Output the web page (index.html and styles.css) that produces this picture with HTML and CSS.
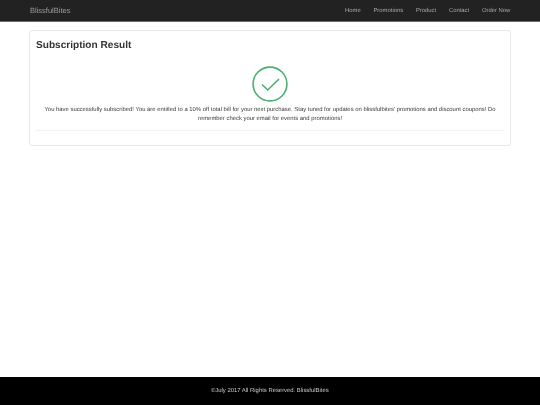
FILE: index.html
```html
<!DOCTYPE html>
<html lang="en">
<head>
<meta charset="utf-8">
<title>BlissfulBites</title>
<link rel="stylesheet" href="styles.css">
</head>
<body>
<nav class="navbar">
  <a class="brand" href="#">BlissfulBites</a>
  <ul class="nav-links">
    <li><a href="#">Home</a></li>
    <li><a href="#">Promotions</a></li>
    <li><a href="#">Product</a></li>
    <li><a href="#">Contact</a></li>
    <li><a href="#">Order Now</a></li>
  </ul>
</nav>
<main class="content">
  <section class="card">
    <h1 class="card-title">Subscription Result</h1>
    <div class="result">
      <svg class="check" viewBox="0 0 36 36" width="36" height="36" aria-hidden="true">
        <circle cx="18" cy="18" r="16.9" fill="none" stroke="#4caf72" stroke-width="1.6"/>
        <path d="M10 18.5 L15.7 24 L27 13" fill="none" stroke="#4caf72" stroke-width="1.6"/>
      </svg>
      <p class="message">You have successfully subscribed! You are entitled to a 10% off total bill for your next purchase. Stay tuned for updates on blissfulbites' promotions and discount coupons! Do remember check your email for events and promotions!</p>
    </div>
    <hr class="rule">
  </section>
</main>
<footer class="footer"><span class="footer-text">©July 2017 All Rights Reserved. BlissfulBites</span></footer>
</body>
</html>
```
FILE: styles.css
```css
* { box-sizing: border-box; }
html, body { height: 100%; }
body {
  margin: 0;
  display: flex;
  flex-direction: column;
  min-height: 405px;
  background: #fff;
  font-family: "Liberation Sans", Arial, sans-serif;
  color: #333;
  text-rendering: geometricPrecision;
}
.navbar {
  height: 22px;
  flex: none;
  display: flex;
  align-items: center;
  justify-content: space-between;
  padding: 0 30px;
  background: #222;
  border-bottom: 1px solid #6a6a6a;
}
.brand {
  font-size: 7.5px;
  color: #9d9d9d;
  text-decoration: none;
  will-change: transform;
}
.nav-links {
  display: flex;
  gap: 12.7px;
  margin: 0;
  padding: 0;
  list-style: none;
  font-size: 5.9px;
  will-change: transform;
}
.nav-links a {
  color: #a8a8a8;
  text-decoration: none;
}
.content {
  flex: 1;
  padding: 8px 29px 0;
}
.card {
  height: 116px;
  padding: 8px 6px 0;
  background: #fff;
  border: 1px solid #e8e8e8;
  border-radius: 3px;
}
.card-title {
  margin: 0;
  font-size: 10.1px;
  line-height: 13px;
  font-weight: 700;
  color: #333;
  will-change: transform;
}
.result {
  display: flex;
  flex-direction: column;
  align-items: center;
  margin-top: 14px;
}
.check { display: block; }
.message {
  margin: 3.5px 0 0;
  font-size: 5.9px;
  line-height: 9px;
  text-align: center;
  color: #3a3a3a;
  will-change: transform;
}
.rule {
  margin: 6px 0 0;
  border: 0;
  border-top: 1px solid #f2f2f2;
}
.footer {
  height: 28px;
  flex: none;
  display: flex;
  align-items: center;
  justify-content: center;
  background: #000;
}
.footer-text {
  font-size: 5.9px;
  color: #ccc;
  will-change: transform;
}
```
